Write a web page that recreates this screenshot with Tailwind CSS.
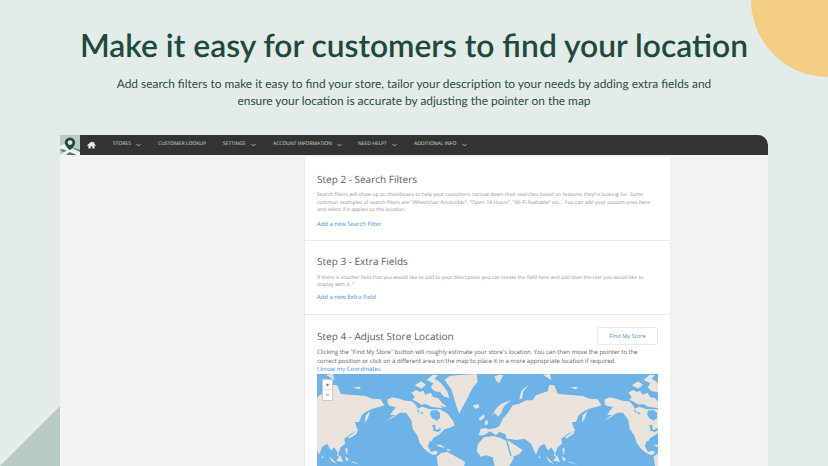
<!DOCTYPE html>
<html>
<head>
<meta charset="utf-8">
<script src="https://cdn.jsdelivr.net/npm/@tailwindcss/browser@4"></script>
</head>
<body class="m-0">
<div class="relative w-[828px] h-[466px] overflow-hidden bg-[#e3ece9] font-['Open_Sans',sans-serif] [text-rendering:geometricPrecision]">
  <div class="absolute right-[-77px] top-[-77px] w-[154px] h-[154px] rounded-full bg-[#f3cd84]"></div>
  <svg class="absolute left-0 bottom-0" width="60" height="60" viewBox="0 0 60 60"><polygon points="0,60 60,0 60,60" fill="#b9cbc5"/></svg>

  <div class="relative flex flex-col items-center h-[135px]">
    <h1 class="mt-[23px] font-['Lato',sans-serif] font-semibold text-[31.8px] leading-[44px] text-[#1d4a3d] whitespace-nowrap">Make it easy for customers to find your location</h1>
    <p class="mt-[9px] w-[640px] text-center font-['Lato',sans-serif] text-[11.9px] leading-[16.5px] text-[#2d4f45]">Add search filters to make it easy to find your store, tailor your description to your needs by adding extra fields and<br>ensure your location is accurate by adjusting the pointer on the map</p>
  </div>

  <div class="relative ml-[60px] w-[708px] h-[331px] bg-[#f1f4f3] rounded-tr-[10px]">
    <nav class="flex items-center h-[20px] bg-[#323332] rounded-tr-[10px] text-[5px] text-[#cfe0d8] whitespace-nowrap">
      <svg class="w-[20px] h-[20px] shrink-0" viewBox="0 0 20 20">
        <rect width="20" height="20" fill="#b9cbc5"/>
        <polygon points="0,15 8,20 20,20 20,15 11,12" fill="#557f70"/>
        <polygon points="0,11 4,9 20,17 20,20 17,20 0,13" fill="#eef3f1"/>
        <polygon points="0,20 10,13 13,15 5,20" fill="#eef3f1"/>
        <path d="M10 2.5a5.2 5.2 0 0 0-5.2 5.2c0 3.4 5.2 7.3 5.2 7.3s5.2-3.9 5.2-7.3A5.2 5.2 0 0 0 10 2.5z" fill="#1f4a3c"/>
        <circle cx="10" cy="7.6" r="2.4" fill="#dfe8e5"/>
      </svg>
      <svg class="ml-[7px] w-[9px] h-[8px] shrink-0" viewBox="0 0 20 18"><path fill="#e8eeeb" d="M10 1 0 9.6l1.2 1.4L3 9.5V17h5.2v-5h3.6v5H17V9.5l1.8 1.5L20 9.6l-3.5-3V2h-2.6v2.4z"/></svg>
      <span class="ml-[17px] w-[18px]">STORES</span>
      <svg class="ml-[5px] w-[5px] h-[4px] shrink-0" viewBox="0 0 10 8" fill="none" stroke="#cfe0d8" stroke-width="1.4"><path d="M1 2l4 4 4-4"/></svg>
      <span class="ml-[17px] w-[48px]">CUSTOMER LOOKUP</span>
      <span class="ml-[17px] w-[22px]">SETTINGS</span>
      <svg class="ml-[6px] w-[5px] h-[4px] shrink-0" viewBox="0 0 10 8" fill="none" stroke="#cfe0d8" stroke-width="1.4"><path d="M1 2l4 4 4-4"/></svg>
      <span class="ml-[17px] w-[58px]">ACCOUNT INFORMATION</span>
      <svg class="ml-[6px] w-[5px] h-[4px] shrink-0" viewBox="0 0 10 8" fill="none" stroke="#cfe0d8" stroke-width="1.4"><path d="M1 2l4 4 4-4"/></svg>
      <span class="ml-[16px] w-[28px]">NEED HELP?</span>
      <svg class="ml-[6px] w-[5px] h-[4px] shrink-0" viewBox="0 0 10 8" fill="none" stroke="#cfe0d8" stroke-width="1.4"><path d="M1 2l4 4 4-4"/></svg>
      <span class="ml-[17px] w-[42px]">ADDITIONAL INFO</span>
      <svg class="ml-[6px] w-[5px] h-[4px] shrink-0" viewBox="0 0 10 8" fill="none" stroke="#cfe0d8" stroke-width="1.4"><path d="M1 2l4 4 4-4"/></svg>
    </nav>

    <main class="ml-[244px] mt-[2px] w-[367px] h-[309px] bg-white border-x border-[#e8ecea] overflow-hidden flex flex-col">
      <section class="h-[84px] shrink-0 px-[12px] pt-[14px] border-b border-[#e8ecea]">
        <h2 class="text-[10px] leading-[16px] text-[#55625e]">Step 2 - Search Filters</h2>
        <p class="mt-[5px] text-[5.1px] leading-[7.6px] text-[#8f9392] whitespace-nowrap">Search filters will show up as checkboxes to help your customers narrow down their searches based on features they're looking for. Some<br>common examples of search filters are "Wheelchair Accessible", "Open 24-Hours", "Wi-Fi Available" etc... You can add your custom ones here<br>and select if it applies to this location.</p>
        <a class="block mt-[5px] text-[5.9px] leading-[8px] text-[#3f8fcf]">Add a new Search Filter</a>
      </section>
      <section class="h-[74px] shrink-0 px-[12px] pt-[12px] border-b border-[#e8ecea]">
        <h2 class="text-[10px] leading-[16px] text-[#55625e]">Step 3 - Extra Fields</h2>
        <p class="mt-[5.5px] text-[5.1px] leading-[7.6px] text-[#8f9392] whitespace-nowrap">If there is another field that you would like to add to your description you can create the field here and add then the text you would like to<br>display with it. "</p>
        <a class="block mt-[3.5px] text-[5.9px] leading-[8px] text-[#3f8fcf]">Add a new Extra Field</a>
      </section>
      <section class="flex-1 min-h-0 px-[12px] pt-[12px]">
        <div class="flex items-center justify-between h-[18px]">
          <h2 class="text-[10px] leading-[16px] text-[#55625e]">Step 4 - Adjust Store Location</h2>
          <button class="w-[61px] h-[18px] border border-[#e5e9e8] rounded-[2px] text-[5.7px] text-[#5a8fb0]">Find My Store</button>
        </div>
        <p class="mt-[3px] text-[5.97px] leading-[8.6px] text-[#5b6260] whitespace-nowrap">Clicking the "Find My Store" button will roughly estimate your store's location. You can then move the pointer to the<br>correct position or click on a different area on the map to place it in a more appropriate location if required.</p>
        <a class="block text-[5.97px] leading-[9px] text-[#3f8fcf]">I know my Coordinates</a>
        <div class="relative w-[341px] h-[92px] bg-[#6db3e8] overflow-hidden">
          <svg class="block" width="341" height="92" viewBox="317 374 341 92">
            <defs>
              <g id="am">
                <g fill="#eae3db">
                  <path d="M215 82 230 76 250 80 268 86 288 88 300 100 305 110 318 104 330 108 342 112 372 112 395 125 412 148 416 160 400 168 385 172 372 186 362 192 352 198 345 210 340 212 335 222 345 240 358 236 366 240 360 248 350 248 336 240 322 228 310 210 305 192 290 170 286 145 270 122 252 122 240 130 222 128 232 115 240 105 222 102 215 95Z"/>
                  <path d="M212 146 232 132 246 127 230 137Z"/>
                  <path d="M286 62 300 54 312 60 322 56 328 68 344 62 352 76 366 78 378 92 392 104 374 108 346 104 330 96 316 98 300 88 290 84 296 74Z"/>
                  <path d="M296 40 316 28 330 38 316 50ZM332 24 350 8 366 10 356 20 372 30 384 44 394 58 400 78 384 74 372 60 356 58 344 46 352 34Z"/>
                  <path d="M386 24 400 12 440 8 482 6 485 30 472 44 462 62 452 84 436 112 430 125 422 104 414 78 406 52Z"/>
                  <path d="M470 100 488 97 490 106 478 111Z"/>
                  <path d="M360 218 374 218 388 228 370 224Z"/>
                  <path d="M392 232 402 232 404 236 394 236Z"/>
                  <path d="M362 254 375 243 395 240 420 254 448 270 444 282 366 282Z"/>
                </g>
                <g fill="#6db3e8">
                  <path d="M345 116 362 114 372 122 372 138 362 146 348 138 342 126Z"/>
                  <path d="M372 98 386 106 396 118 384 112Z"/>
                  <path d="M348 160 358 158 358 170 364 174 372 168 376 174 366 180 352 176 352 168Z"/>
                  <path d="M302 112 310 116 308 124ZM312 120 322 122 318 128Z"/>
                  <path d="M340 208 370 206 366 216 350 214 346 226 340 224Z"/>
                </g>
              </g>
              <g id="eu" fill="#eae3db">
                <path d="M-28 238-24 216-6 196 22 192 44 198 60 206 72 250 84 258 70 282 26 282 20 256 0 250-16 254Z"/>
                <path d="M64 204 110 234 100 246 78 256Z"/>
                <path d="M-22 190-16 170-2 168 8 172 30 168 40 162 52 138 66 122 80 100 100 95 120 85 140 85 150 70 185 58 190 38 205 40 215 65 240 68 265 70 290 72 310 80 335 82 346 100 330 105 310 110 290 120 278 130 270 150 258 150 266 176 245 186 226 200 228 215 215 226 208 244 195 226 186 236 175 215 160 224 150 248 135 215 115 200 92 204 62 200 58 186 40 180 30 190 12 178-6 190Z"/>
                <path d="M14 138 30 110 44 96 76 84 54 102 44 126 36 134 26 122Z"/>
                <path d="M-4 150 4 142 6 156-2 160Z"/>
                <path d="M-22 140-6 126-4 136-16 146Z"/>
                <path d="M100 82 106 56 130 37 112 58 108 80Z"/>
                <path d="M26 12 40 8 52 10 44 24 40 34 30 26Z"/>
                <path d="M170 8 192 6 196 24Z"/>
                <path d="M252 46 276 44 270 52Z"/>
                <path d="M304 118 296 140 288 152 290 130Z"/>
                <path d="M268 170 262 186 240 200 238 194 256 182Z"/>
                <path d="M228 230 236 228 234 250Z"/>
                <path d="M180 252 204 276 188 268ZM202 266 214 250 222 270ZM244 266 276 278 252 272ZM228 252 240 262 232 268Z"/>
                <path d="M206 240 212 258 204 250Z"/>
                <path d="M160 250 164 258 158 258Z"/>
              </g>
            </defs>
            <g transform="translate(316 372) scale(.3333)"><use href="#am"/></g>
            <g transform="translate(533 372) scale(.3333)"><use href="#am"/></g>
            <g transform="translate(486 372) scale(.3333)"><use href="#eu"/></g>
            <g transform="translate(269 372) scale(.3333)"><use href="#eu"/></g>
          </svg>
          <div class="absolute left-[5px] top-[5px] w-[11px] h-[22px] bg-white rounded-[1px] border border-black/20 flex flex-col text-[6px] leading-[10px] text-center font-bold text-[#555]">
            <span class="h-[10px] border-b border-[#ddd]">+</span>
            <span class="h-[10px]">−</span>
          </div>
        </div>
      </section>
    </main>
  </div>
</div>
</body>
</html>
